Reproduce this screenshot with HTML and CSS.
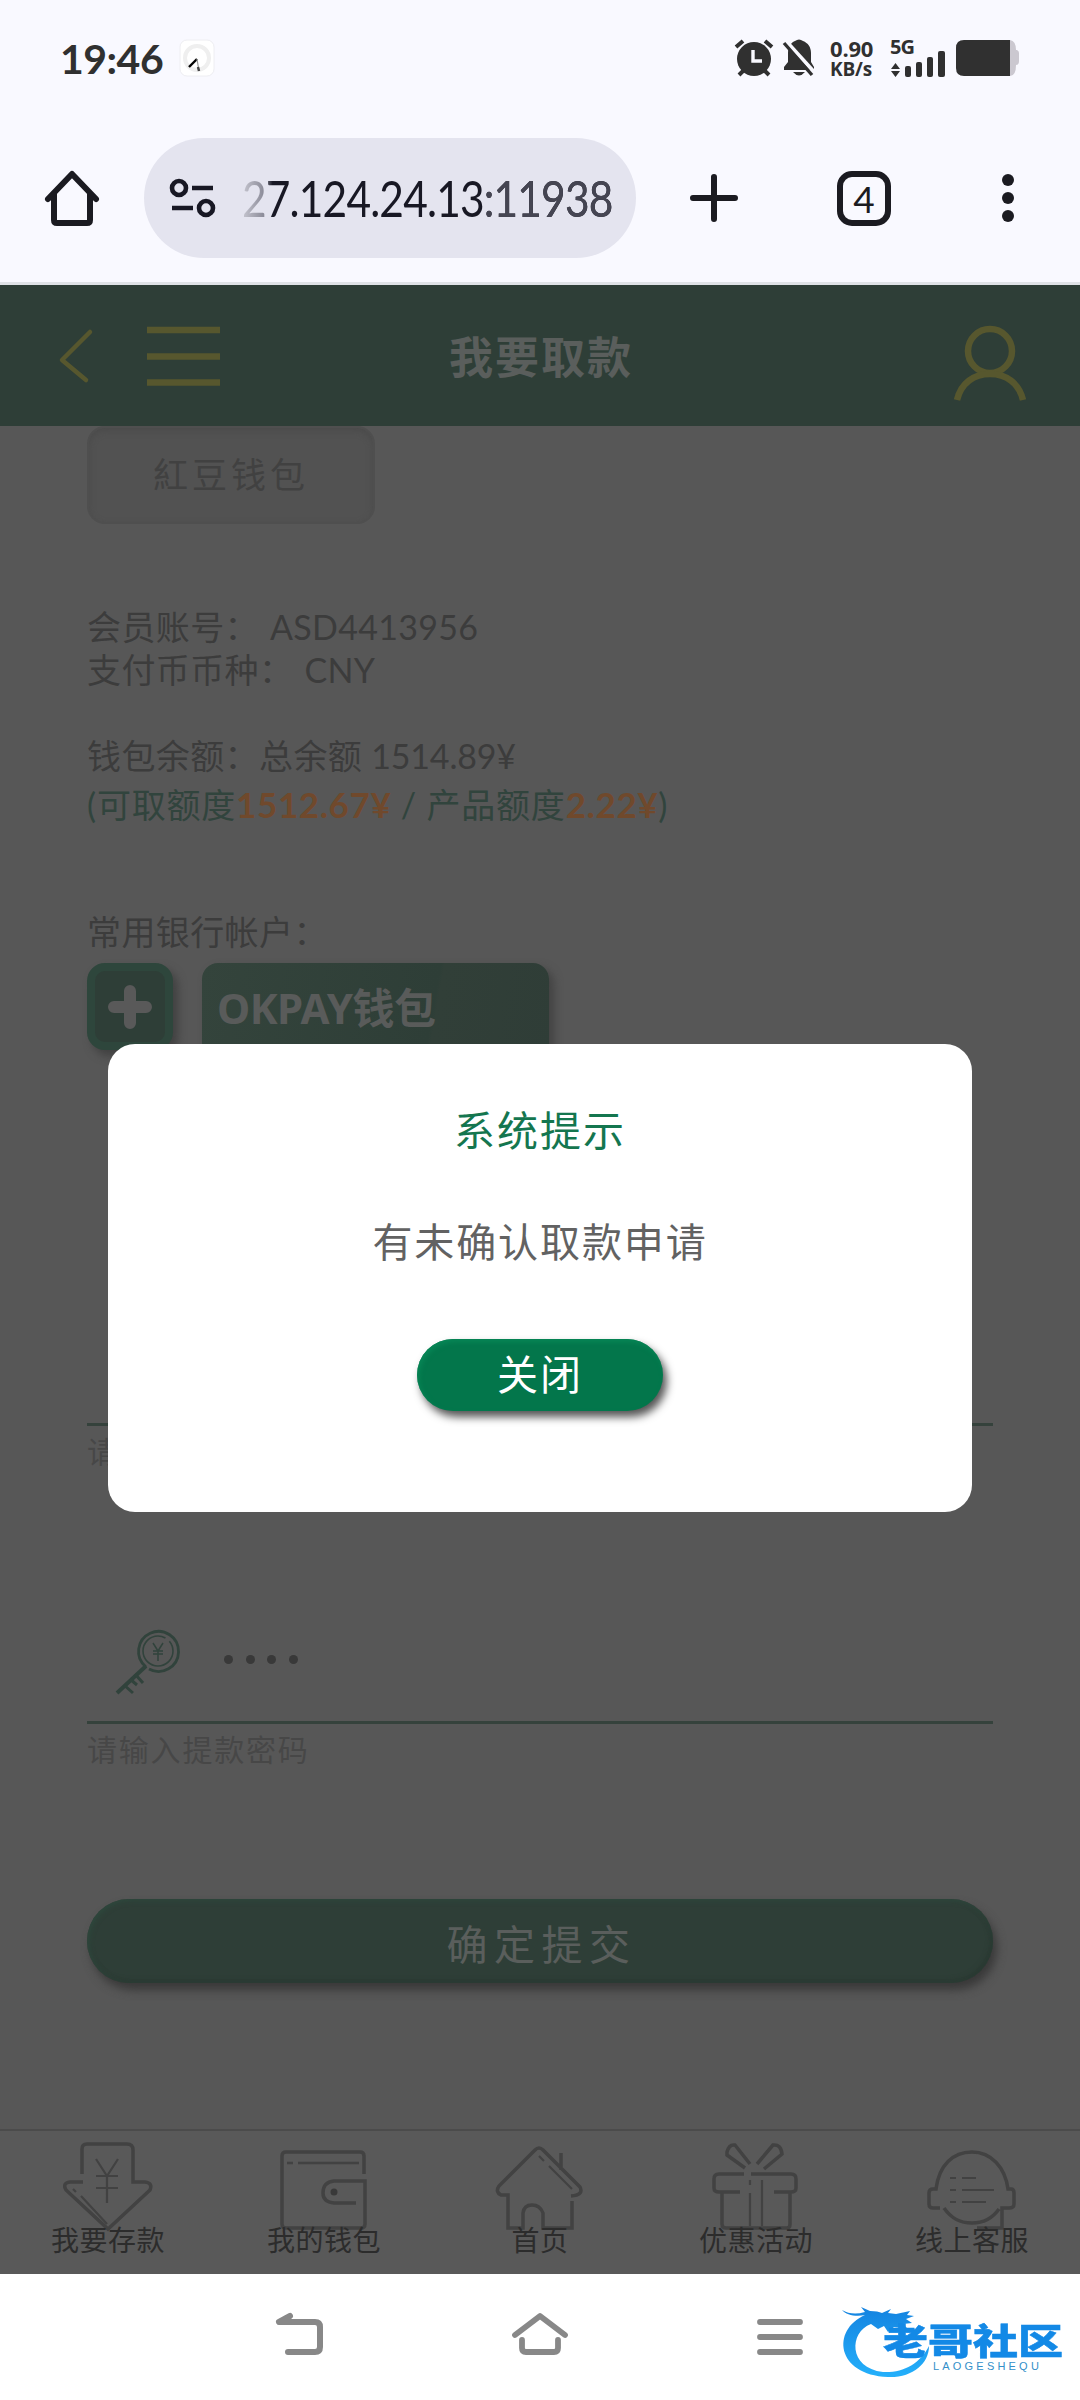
FILE: index.html
```html
<!DOCTYPE html>
<html lang="zh-CN">
<head>
<meta charset="utf-8">
<title>我要取款</title>
<link rel="stylesheet" href="styles.css">
</head>
<body>
<div class="status">
  <span class="time">19:46</span>
  <svg class="app-clock" width="36" height="38" viewBox="0 0 36 38"><rect x="1" y="1" width="34" height="36" rx="7" fill="#fff" stroke="#eeeef2"/><circle cx="18" cy="19" r="12" fill="none" stroke="#efefef" stroke-width="4"/><path d="M18 20 10 28" stroke="#000" stroke-width="2.4"/><path d="M18 20 20 32" stroke="#999" stroke-width="1.2"/><path d="m19 28 1 4" stroke="#444" stroke-width="2.4"/></svg>
  <div class="status-icons">
    <svg width="38" height="38" viewBox="0 0 38 38"><g fill="none" stroke="#303030" stroke-width="4"><path d="M1 8 8 2M30 2l7 6M9 31l-5 5M29 31l5 5"/></g><circle cx="19" cy="20" r="17" fill="#303030"/><path d="M18 11v11h9" fill="none" stroke="#f9f9ff" stroke-width="3.4"/></svg>
    <svg class="bell" width="32" height="38" viewBox="0 0 32 38"><path d="M1 31v-3l4-5V14C5 7 9 3 12 2q4-3 8 0c5 2 8 6 8 12v9l3 5v3ZM10 33h12q-6 7-12 0" fill="#303030"/><path d="M2 1 32 34" stroke="#f9f9ff" stroke-width="4"/><path d="M1 4 29 36" stroke="#303030" stroke-width="3.4"/></svg>
    <div class="rate"><span>0.90</span><span class="unit">KB/s</span></div>
    <div class="signal"><span>5G</span><svg width="56" height="26" viewBox="0 0 56 26"><path d="M1 18 5.500 12l4.500 6ZM1 20l4.500 6 4.500-6Z" fill="#303030"/><rect x="15" y="15" width="6" height="11" rx="2" fill="#303030"/><rect x="26" y="11" width="6" height="15" rx="2" fill="#303030"/><rect x="37" y="6" width="6" height="20" rx="2" fill="#303030"/><rect x="48" y="0" width="7" height="26" rx="2" fill="#303030"/></svg></div>
    <svg class="battery" width="64" height="38" viewBox="0 0 64 38"><path d="M54 1q6 1 6 10h1q2 1 2 3v8q0 4-3 4 0 11-6 11Z" fill="#cbc8d0"/><path d="M8 1h46v36H8q-8 0-8-8V9q0-8 8-8Z" fill="#303030"/></svg>
  </div>
</div>
<div class="browser">
  <svg class="home" width="54" height="56" viewBox="0 0 54 56"><path d="M3 29 27 4l24 25" fill="none" stroke="#1b1b21" stroke-width="6" stroke-linejoin="round" stroke-linecap="round"/><path d="M9 24v26q0 3 3 3h30q3 0 3-3V24" fill="none" stroke="#1b1b21" stroke-width="6"/></svg>
  <div class="omnibox">
    <svg width="46" height="40" viewBox="0 0 46 40"><g fill="none" stroke="#181824" stroke-width="4.600"><circle cx="9" cy="10" r="7"/><circle cx="36" cy="30" r="7"/><path d="M22 10h21M2 30h21"/></g></svg>
    <span class="url">27.124.24.13<span class="port">:11938</span></span>
  </div>
  <svg class="plus" width="48" height="50" viewBox="0 0 48 50"><path d="M3 25h42M24 4v42" stroke="#1b1b21" stroke-width="6" stroke-linecap="round"/></svg>
  <span class="tabs">4</span>
  <svg class="dots" width="14" height="50" viewBox="0 0 14 50"><g fill="#1b1b21"><circle cx="7" cy="7" r="6"/><circle cx="7" cy="25" r="6"/><circle cx="7" cy="43" r="6"/></g></svg>
</div>
<main class="page">
  <header class="header">
    <svg class="back" width="34" height="54" viewBox="0 0 34 54"><path d="M31 3 3 31l24 20" fill="none" stroke="#57572e" stroke-width="4.500" stroke-linecap="round" stroke-linejoin="round"/></svg>
    <svg class="burger" width="73" height="60" viewBox="0 0 73 60"><path d="M0 3h73M0 29.500h73M0 55.500h73" stroke="#57572e" stroke-width="6.500"/></svg>
    <h1>我要取款</h1>
    <svg class="user" width="74" height="74" viewBox="0 0 74 74"><g fill="none" stroke="#57572e" stroke-width="6.500"><circle cx="37" cy="25" r="22"/><path d="M4 74C8 57 21 48 37 48s29 9 33 26"/></g></svg>
  </header>
  <section class="form">
    <div class="wallet-tab">紅豆钱包</div>
    <div class="line account">会员账号：<span class="val">ASD4413956</span></div>
    <div class="line currency">支付币币种：<span class="val">CNY</span></div>
    <div class="line balance">钱包余额：总余额 <span class="sum">1514.89¥</span></div>
    <div class="line limits">(可取额度<b>1512.67¥</b> / 产品额度<b>2.22¥</b>)</div>
    <div class="line bank">常用银行帐户：</div>
    <div class="cards">
      <div class="add"><svg width="44" height="44" viewBox="0 0 44 44"><path d="M22 6v32M6 22h32" stroke="#595959" stroke-width="12" stroke-linecap="round"/></svg></div>
      <div class="card">OKPAY钱包</div>
    </div>
    <div class="field amount"></div>
    <div class="hint">请输入金额</div>
    <div class="field password">
      <svg width="66" height="68" viewBox="0 0 66 68"><g fill="none" stroke="#31433c" stroke-width="2.800"><path d="M31 38a20 20 0 1 1 3 2"/><circle cx="43" cy="22" r="15" stroke-width="1.600" stroke-dasharray="78 5"/><path d="m31 37-29 27" stroke-width="4"/><path d="m20 45 8 9m-13-4 7 6m-13 0 9 8" stroke-width="3"/><path d="m38 14 5 8 5-8M38 22h10M38 25h10M43 22v10" stroke-width="1.500"/></g></svg>
      <i></i><i></i><i></i><i></i>
    </div>
    <div class="hint">请输入提款密码</div>
    <div class="submit">确定提交</div>
  </section>
  <nav class="nav">
    <div><svg width="90" height="90" viewBox="0 0 90 90"><g fill="none" stroke="#424242" stroke-width="3.500"><path d="M20 33V8q0-5 5-5h40q6 0 6 6v32h12q8 1 5 8L46 88 4 49q-4-7 4-8h13"/><path d="m11 48 3 3m5 4 26 28M34 18l11 17 11-17M34 35h22M34 47h22M45 35v27" stroke-width="2.200"/></g></svg><span>我要存款</span></div>
    <div><svg width="90" height="90" viewBox="0 0 90 90"><g fill="none" stroke="#424242" stroke-width="3.500"><path d="M86 33V15q0-4-4-4H8q-4 0-4 4v68q0 4 4 4h75q4 0 4-4V40H56q-11 1-11 12 0 9 11 10h22"/><path d="M9 22h6M20 22h61" stroke-width="2.600"/></g><circle cx="56" cy="51" r="3.500" fill="#393939"/></svg><span>我的钱包</span></div>
    <div><svg width="90" height="90" viewBox="0 0 90 90"><g fill="none" stroke="#424242" stroke-width="3.500"><path d="M78 60v27H49V72q-3-8-11-8t-9 8v15H14V54H7q-6-3-2-9L41 9q4-4 8 0l37 37q4 8-9 9M67 29V12"/><path d="m45 15 5 5m5 5 23 23" stroke-width="2.200"/></g></svg><span>首页</span></div>
    <div><svg width="90" height="90" viewBox="0 0 90 90"><g fill="none" stroke="#424242" stroke-width="3.500"><path d="M40 23 25 4q-6-1-8 7v3l18 13M47 23 63 4q8-1 9 9L54 28M34 33H9q-5 0-5 5v9q0 4 5 4h21M41 33h40q5 0 5 5v9q0 4-5 4H64M12 52v31q0 4 4 4h61q3 0 3-4V52"/><path d="M40 39v5m0 8v33M52 39v46" stroke-width="2.200"/></g></svg><span>优惠活动</span></div>
    <div><svg width="90" height="90" viewBox="0 0 90 90"><g fill="none" stroke="#424242" stroke-width="3.500"><path d="M14 67H7q-4 0-4-4V52q0-4 4-4h3C13 24 27 11 46 11s33 15 36 37h3q3 0 3 4v11q0 4-5 4h-7v20H51M18 67c7 10 15 15 28 15 11 0 20-4 27-14"/><path d="M24 37h6m6 0h14M24 49h6m6 0h32M24 61h6m6 0h24" stroke-width="2.200"/></g></svg><span>线上客服</span></div>
  </nav>
  <div class="modal" role="dialog">
    <h2>系统提示</h2>
    <p>有未确认取款申请</p>
    <button>关闭</button>
  </div>
</main>
<footer class="system">
  <svg class="sys-back" width="50" height="46" viewBox="0 0 50 46"><path d="M15 5 4 11h36q5 0 5 5v20q0 5-5 5H13" fill="none" stroke="#888" stroke-width="6" stroke-linecap="round" stroke-linejoin="round"/></svg>
  <svg class="sys-home" width="60" height="46" viewBox="0 0 60 46"><path d="M5 24 30 5l25 19M12 29v8q0 4 4 4h28q4 0 4-4v-8" fill="none" stroke="#888" stroke-width="5.800" stroke-linecap="round" stroke-linejoin="round"/></svg>
  <svg class="sys-menu" width="46" height="46" viewBox="0 0 46 46"><path d="M3 11h40M3 26h40M3 41h40" stroke="#888" stroke-width="5.800" stroke-linecap="round"/></svg>
  <div class="brand">
    <svg width="90" height="78" viewBox="0 0 90 78"><defs><linearGradient id="dragon" x1="0" y1="0" x2="0" y2="1"><stop stop-color="#1483e0"/><stop offset="1" stop-color="#24b0fb"/></linearGradient></defs><path d="M0 8q10 6 23 2l-4-5 9 4q8 0 12 2l9-4-3 4 8 1 14-3-3 4 7 1-8 3 6 4-9 1 5 5-14-2-6 5-4-6-6 3-7-5C7 30 6 66 41 70c20 1 37-8 46-26 0 18-17 32-41 31C-6 73-11 28 23 13 14 15 4 13 0 8Z" fill="url(#dragon)"/></svg>
    <span class="brand-name">老哥社区</span>
    <span class="brand-sub">LAOGESHEQU</span>
  </div>
</footer>
</body>
</html>
```
FILE: styles.css
```css
* { box-sizing: border-box; }
body { margin: 0; width: 1080px; height: 2400px; overflow: hidden; display: flex; flex-direction: column; background: #f9f9ff; font-family: Lato, "Noto Sans CJK SC", sans-serif; }
svg { display: block; flex: none; overflow: visible; }
h1, h2, p { margin: 0; }

.status { height: 116px; display: flex; align-items: center; padding: 0 60px 0 60px; color: #303030; }
.time { width: 120px; font: bold 41px/1 Lato, sans-serif; letter-spacing: -.5px; }
.app-clock { margin-left: 1px; }
.status-icons { display: flex; align-items: center; margin-left: 520px; }
.bell { margin-left: 10px; }
.rate { display: flex; flex-direction: column; gap: 2px; margin-left: 15px; width: 46px; font: bold 22px/20px "Open Sans", sans-serif; letter-spacing: -.2px; white-space: nowrap; }
.rate .unit { font-size: 19px; line-height: 18px; }
.signal { position: relative; width: 56px; height: 38px; margin-left: 14px; display: flex; flex-direction: column; justify-content: flex-end; }
.signal span { position: absolute; left: 0; top: -2px; font: bold 20px/20px "Open Sans", sans-serif; letter-spacing: -1px; }
.battery { margin-left: 10px; }

.browser { height: 169px; display: flex; align-items: flex-start; padding: 22px 65px 0 45px; border-bottom: 3px solid #dfe2e6; }
.home { margin-top: 32px; }
.omnibox { width: 492px; height: 120px; margin-left: 45px; border-radius: 60px; background: #e4e4ef; display: flex; align-items: center; padding-left: 26px; }
.url { margin-left: 26px; font-size: 50px; line-height: 60px; letter-spacing: -1px; white-space: nowrap; transform: scaleX(.85); transform-origin: left; background: linear-gradient(90deg, #c6c6d0 0, #8b8b98 26px, #181824 36px); background-clip: text; color: transparent; }
.port { color: #454552; }
.plus { margin: 35px 0 0 54px; }
.tabs { width: 54px; height: 55px; margin: 33px 0 0 99px; border: 6px solid #1b1b21; border-radius: 15px; text-align: center; font: 37px/43px Lato, sans-serif; color: #1b1b21; }
.dots { margin: 35px 0 0 110px; }

.page { position: relative; height: 1989px; background: #575757; color: #3c3c3c; overflow: hidden; }
.header { height: 141px; display: flex; background: #2e3e37; padding-left: 59px; }
.back { margin-top: 44px; }
.burger { margin: 42px 0 0 54px; }
.header h1 { width: 200px; margin: 38px 0 0 229px; font: bold 44px/64px "Noto Sans CJK SC", sans-serif; letter-spacing: 2px; color: #5a5e5c; }
.user { margin: 41px 0 0 304px; }

.form { padding: 0 87px; height: 1703px; }
.wallet-tab { width: 288px; height: 98px; border: 2px solid #4f4f4f; border-radius: 18px; background: #525252; box-shadow: inset 0 3px 6px #4b4b4b; text-align: center; font-size: 35px; line-height: 92px; letter-spacing: 4px; color: #414141; }
.line { height: 43px; font-size: 34px; line-height: 43px; white-space: pre; letter-spacing: .4px; }
.account { margin-top: 81px; }
.val { margin-left: 11px; letter-spacing: .3px; }
.balance { margin-top: 43px; }
.sum { letter-spacing: -.2px; }
.limits { margin-top: 6px; letter-spacing: .8px; color: #31443d; }
.limits b { color: #70492c; font-size: 35px; letter-spacing: .6px; }
.bank { margin-top: 84px; }
.cards { display: flex; gap: 29px; margin-top: 10px; }
.add { width: 86px; height: 87px; display: grid; place-items: center; border: 8px solid #2e463c; border-radius: 18px; background: #2e3e37; box-shadow: 5px 6px 9px #414141; }
.card { width: 347px; height: 120px; padding-left: 15px; border-radius: 16px; background: linear-gradient(100deg, #34443c, #2e3e37 65%, #313f38 66%, #2f3d37); box-shadow: 5px 5px 9px #434343; font: bold 42px/89px "Noto Sans", "Noto Sans CJK SC", sans-serif; letter-spacing: -.5px; color: #595b5a; }
.field { border-bottom: 3px solid #35423c; }
.amount { height: 343px; }
.hint { height: 52px; font-size: 30px; line-height: 50px; letter-spacing: 1.8px; color: #474747; }
.password { height: 246px; display: flex; align-items: flex-start; padding: 151px 0 0 28px; }
.password i { width: 9px; height: 9px; margin: 26px 12.500px 0 0; border-radius: 50%; background: #393939; }
.password svg + i { margin-left: 43px; }
.submit { height: 84px; margin-top: 123px; border-radius: 42px; background: #2e3e37; box-shadow: 4px 7px 10px #393939, inset 2px 2px 5px #2e483d, inset -2px -2px 5px #293831; text-align: center; font-size: 41px; line-height: 91px; letter-spacing: 6.5px; text-indent: 3px; color: #5a5e5c; }

.nav { height: 145px; display: grid; grid-template-columns: repeat(5, 1fr); border-top: 2px solid #4b4b4b; background: #595959; }
.nav div { display: flex; flex-direction: column; align-items: center; padding-top: 10px; }
.nav svg { margin-right: 3px; }
.nav span { margin-top: -11px; font-size: 28px; line-height: 40px; letter-spacing: .5px; color: #2c2c2c; }

.modal { position: absolute; left: 108px; top: 759px; width: 864px; height: 468px; border-radius: 27px; background: #fff; display: flex; flex-direction: column; align-items: center; }
.modal h2 { margin-top: 57px; font-size: 41px; font-weight: 400; line-height: 60px; letter-spacing: 2px; color: #14764f; }
.modal p { margin-top: 51px; font-size: 40px; line-height: 60px; letter-spacing: 1.900px; color: #626262; }
.modal button { width: 246px; height: 72px; margin-top: 67px; padding: 0; border: 0; border-radius: 36px; background: #03764b; box-shadow: 4px 6px 8px #555, inset 2px 3px 5px #078656; font: 41px/72px Lato, "Noto Sans CJK SC", sans-serif; letter-spacing: 2px; color: #fff; }

.system { height: 126px; background: #fff; display: flex; align-items: flex-start; padding-left: 275px; }
.sys-back, .sys-home, .sys-menu { margin-top: 37px; }
.sys-home { margin-left: 185px; }
.sys-menu { margin-left: 187px; }
.brand { position: relative; width: 220px; height: 80px; margin: 28px 0 0 39px; }
.brand-name { position: absolute; left: 41px; top: 17px; font: 900 36px/40px "Noto Sans CJK SC", sans-serif; transform: scaleX(1.25); transform-origin: left; white-space: nowrap; color: #1389e6; -webkit-text-stroke: .5px #1389e6; }
.brand-sub { position: absolute; left: 91px; top: 58px; font: 11px/12px "Liberation Sans", sans-serif; letter-spacing: 3.200px; color: #338fc9; }
```
